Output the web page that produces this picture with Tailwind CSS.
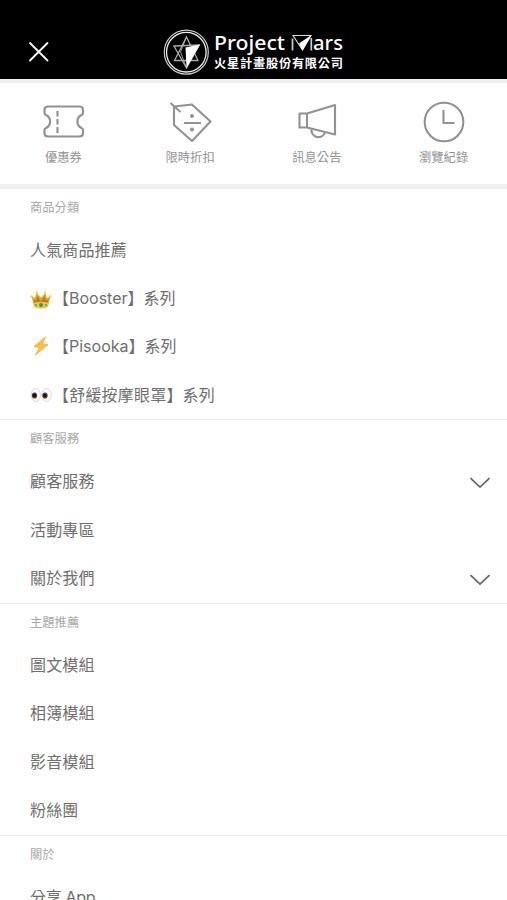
<html lang="zh-Hant">
  <head>
    <meta charset="UTF-8" />
    <meta name="viewport" content="width=device-width, initial-scale=1.0" />
    <title>Project Mars</title>
    <script src="https://cdn.jsdelivr.net/npm/@tailwindcss/browser@4"></script>
  </head>
  <body class="h-screen overflow-hidden bg-white font-['Inter','Noto_Sans_CJK_TC',sans-serif] text-[#6e6e6e]">

    <!-- header -->
    <header class="flex h-[79px] items-end bg-black">
      <button class="w-[163px] pb-[17px] pl-7">
        <svg class="h-[21px] w-[21px]" viewBox="0 0 21 21" fill="none" stroke="white" stroke-width="1.8" stroke-linecap="round">
          <path d="M2 2l17.500 17.500M19.500 2L2 19.500" />
        </svg>
      </button>
      <svg class="h-[52px] w-[184px]" viewBox="0 0 184 52" fill="none">
        <circle cx="23.3" cy="25.2" r="22" stroke="#ccc" stroke-width="1.2" />
        <circle cx="23.3" cy="25.2" r="19.8" stroke="#eee" stroke-width="1.3" />
        <path d="M23.500 10L11.500 33.500H35zM11 19L36.300 18 23.500 41z" stroke="#aaa" stroke-width="1.3" />
        <path d="M23.500 10L17.500 25 23.500 41" stroke="#bbb" stroke-width=".8" />
        <path d="M22.500 20.500L37 17.500 23.500 41z" fill="white" />
        <text x="51" y="23" fill="white" font-size="20.5" font-weight="500" font-family="Noto Sans" textLength="71" lengthAdjust="spacingAndGlyphs">Project</text>
        <path d="M129.500 23.500V11.500M148.300 23.500V11" stroke="#ccc" stroke-width="1.7" />
        <path d="M130 8.500H148L139.500 23z" stroke="#ddd" stroke-width="1.1" />
        <path d="M136 16.500L148.500 8 139.500 23.500z" fill="white" />
        <text x="150" y="23" fill="white" font-size="20.5" font-weight="500" font-family="Noto Sans" textLength="30" lengthAdjust="spacingAndGlyphs">ars</text>
        <text x="51" y="41" fill="white" font-size="12.2" font-weight="700" font-family="Noto Sans CJK TC" textLength="129">火星計畫股份有限公司</text>
      </svg>
    </header>

    <!-- shortcuts -->
    <nav class="grid h-[110px] grid-cols-4 border-t-4 border-b-5 border-[#efefef] text-center text-[12.3px] leading-[18px] text-[#929292]">
      <a class="flex flex-col items-center pt-4">
        <svg class="mb-1.5 ml-0.5 h-[44px] w-[44px]" viewBox="0 0 44 44" fill="none" stroke="#929292" stroke-width="2.2">
          <path d="M6 7.500H37.500Q41 7.500 41 11V14Q41 15.500 39.500 16A7.200 7.200 0 0 0 39.500 29Q41 29.500 41 31V34Q41 37.500 37.500 37.500H6Q2.500 37.500 2.500 34V31Q2.500 29.500 4 29A7.200 7.200 0 0 0 4 16Q2.500 15.500 2.500 14V11Q2.500 7.500 6 7.500z" />
          <path d="M15.500 12V17.500M15.500 20V25.500M15.500 28V34" />
        </svg>
        優惠券
      </a>
      <a class="flex flex-col items-center pt-4">
        <svg class="mb-1.5 h-[44px] w-[44px]" viewBox="0 0 44 44" fill="none" stroke="#929292" stroke-width="2.1" stroke-linejoin="round">
          <path d="M6 7.500L24 5.500 42.500 22.500 24 42 6 26zM2.500 4l10 9M16 24H33" />
          <circle cx="24" cy="17" r="2" fill="#929292" stroke="none" />
          <circle cx="24" cy="30.500" r="2" fill="#929292" stroke="none" />
        </svg>
        限時折扣
      </a>
      <a class="flex flex-col items-center pt-4">
        <svg class="mb-1.5 h-[44px] w-[44px]" viewBox="0 0 44 44" fill="none" stroke="#929292" stroke-width="2.1" stroke-linejoin="round">
          <path d="M4.500 14.500H12L40 6V35.500L12 28.500H4.500zM12 14.500V28.500M16.500 30A7 7 0 0 0 30 33.500" />
        </svg>
        訊息公告
      </a>
      <a class="flex flex-col items-center pt-4">
        <svg class="mb-1.5 h-[44px] w-[44px]" viewBox="0 0 44 44" fill="none" stroke="#929292" stroke-width="2.1">
          <circle cx="22" cy="23" r="19.300" />
          <path d="M21.500 11V24H32.500" />
        </svg>
        瀏覽紀錄
      </a>
    </nav>

    <!-- menu -->
    <section class="pl-[30px]">
      <h2 class="flex h-[36.5px] items-center pt-0.5 text-[12.3px] text-[#a8a8a8]">商品分類</h2>
      <div class="flex h-[48.5px] items-center tracking-[0.15px]">人氣商品推薦</div>
      <div class="flex h-[48px] items-center">
        <svg class="mt-1 mr-px h-[22px] w-[22px]" viewBox="0 0 22 22">
          <path d="M4 17L1.500 7.500 5 9 6.500 4 11 8.500 15.500 4 17 9 20.500 7.500 18 17Q11 20 4 17z" fill="#e2a52e" />
          <path d="M4.500 14L3.500 10 6 12 7.500 7 10 11.500h2L14.500 7 16 12l2.500-2-1 4Q11 12 4.500 14z" fill="#b97a1b" />
          <path d="M3.500 14Q11 11.500 18.500 14L18 18Q11 21 4 18z" fill="#f0c340" />
          <g fill="#f6cf50"><circle cx="1.700" cy="7.500" r="1.200" /><circle cx="7" cy="3.700" r="1.200" /><circle cx="15" cy="3.700" r="1.200" /><circle cx="20.300" cy="7.500" r="1.200" /></g>
          <circle cx="11" cy="16" r="1.900" fill="#249c74" />
          <circle cx="6" cy="16" r="1" fill="#2f9d9b" /><circle cx="16" cy="16" r="1" fill="#2f9d9b" />
        </svg>
        【Booster】系列
      </div>
      <div class="flex h-[48.5px] items-center">
        <svg class="mr-px h-[22px] w-[22px]" viewBox="0 0 22 22">
          <path d="M15.500 2L4 11.500 9.500 12.500 5.500 20 18 9.800 12.500 9z" fill="#fcc23a" stroke="#f5a030" stroke-width=".7" />
        </svg>
        【Pisooka】系列
      </div>
      <div class="flex h-[48.5px] items-center tracking-[0.2px]">
        <svg class="mr-px h-[22px] w-[22px]" viewBox="0 0 22 22">
          <g fill="#fafafa" stroke="#d3d3d3" stroke-width=".8"><ellipse cx="5.800" cy="11" rx="4.700" ry="6.500" /><ellipse cx="16.500" cy="11" rx="4.700" ry="6.500" /></g>
          <g fill="#6d4023"><ellipse cx="4.500" cy="11.500" rx="2.700" ry="3.100" /><ellipse cx="15" cy="11.500" rx="2.700" ry="3.100" /></g>
          <g fill="#111"><circle cx="4.300" cy="11.500" r="1.800" /><circle cx="14.800" cy="11.500" r="1.800" /></g>
        </svg>
        【舒緩按摩眼罩】系列
      </div>
    </section>

    <section class="border-t border-[#ececec] pl-[30px]">
      <h2 class="flex h-[37px] items-center pt-0.5 text-[12.3px] text-[#a8a8a8]">顧客服務</h2>
      <div class="flex h-[48.5px] items-center justify-between pr-4 tracking-[0.15px]">
        顧客服務
        <svg class="mt-1 h-3 w-[22px]" viewBox="0 0 22 12" fill="none" stroke="#666" stroke-width="1.7"><path d="M1.500 1.200L11 10.200l9.500-9" /></svg>
      </div>
      <div class="flex h-[48.5px] items-center tracking-[0.15px]">活動專區</div>
      <div class="flex h-[48.5px] items-center justify-between pr-4 tracking-[0.15px]">
        關於我們
        <svg class="mt-1 h-3 w-[22px]" viewBox="0 0 22 12" fill="none" stroke="#666" stroke-width="1.7"><path d="M1.500 1.200L11 10.200l9.500-9" /></svg>
      </div>
    </section>

    <section class="border-t border-[#ececec] pl-[30px]">
      <h2 class="flex h-[37px] items-center pt-0.5 text-[12.3px] text-[#a8a8a8]">主題推薦</h2>
      <div class="flex h-[48.5px] items-center tracking-[0.15px]">圖文模組</div>
      <div class="flex h-[48.5px] items-center tracking-[0.15px]">相簿模組</div>
      <div class="flex h-[48.5px] items-center tracking-[0.15px]">影音模組</div>
      <div class="flex h-[48.5px] items-center tracking-[0.15px]">粉絲團</div>
    </section>

    <section class="border-t border-[#ececec] pl-[30px]">
      <h2 class="flex h-[37px] items-center pt-0.5 text-[12.3px] text-[#a8a8a8]">關於</h2>
      <div class="flex h-[48px] items-center tracking-[-0.3px]">分享 App</div>
    </section>
  </body>
</html>
